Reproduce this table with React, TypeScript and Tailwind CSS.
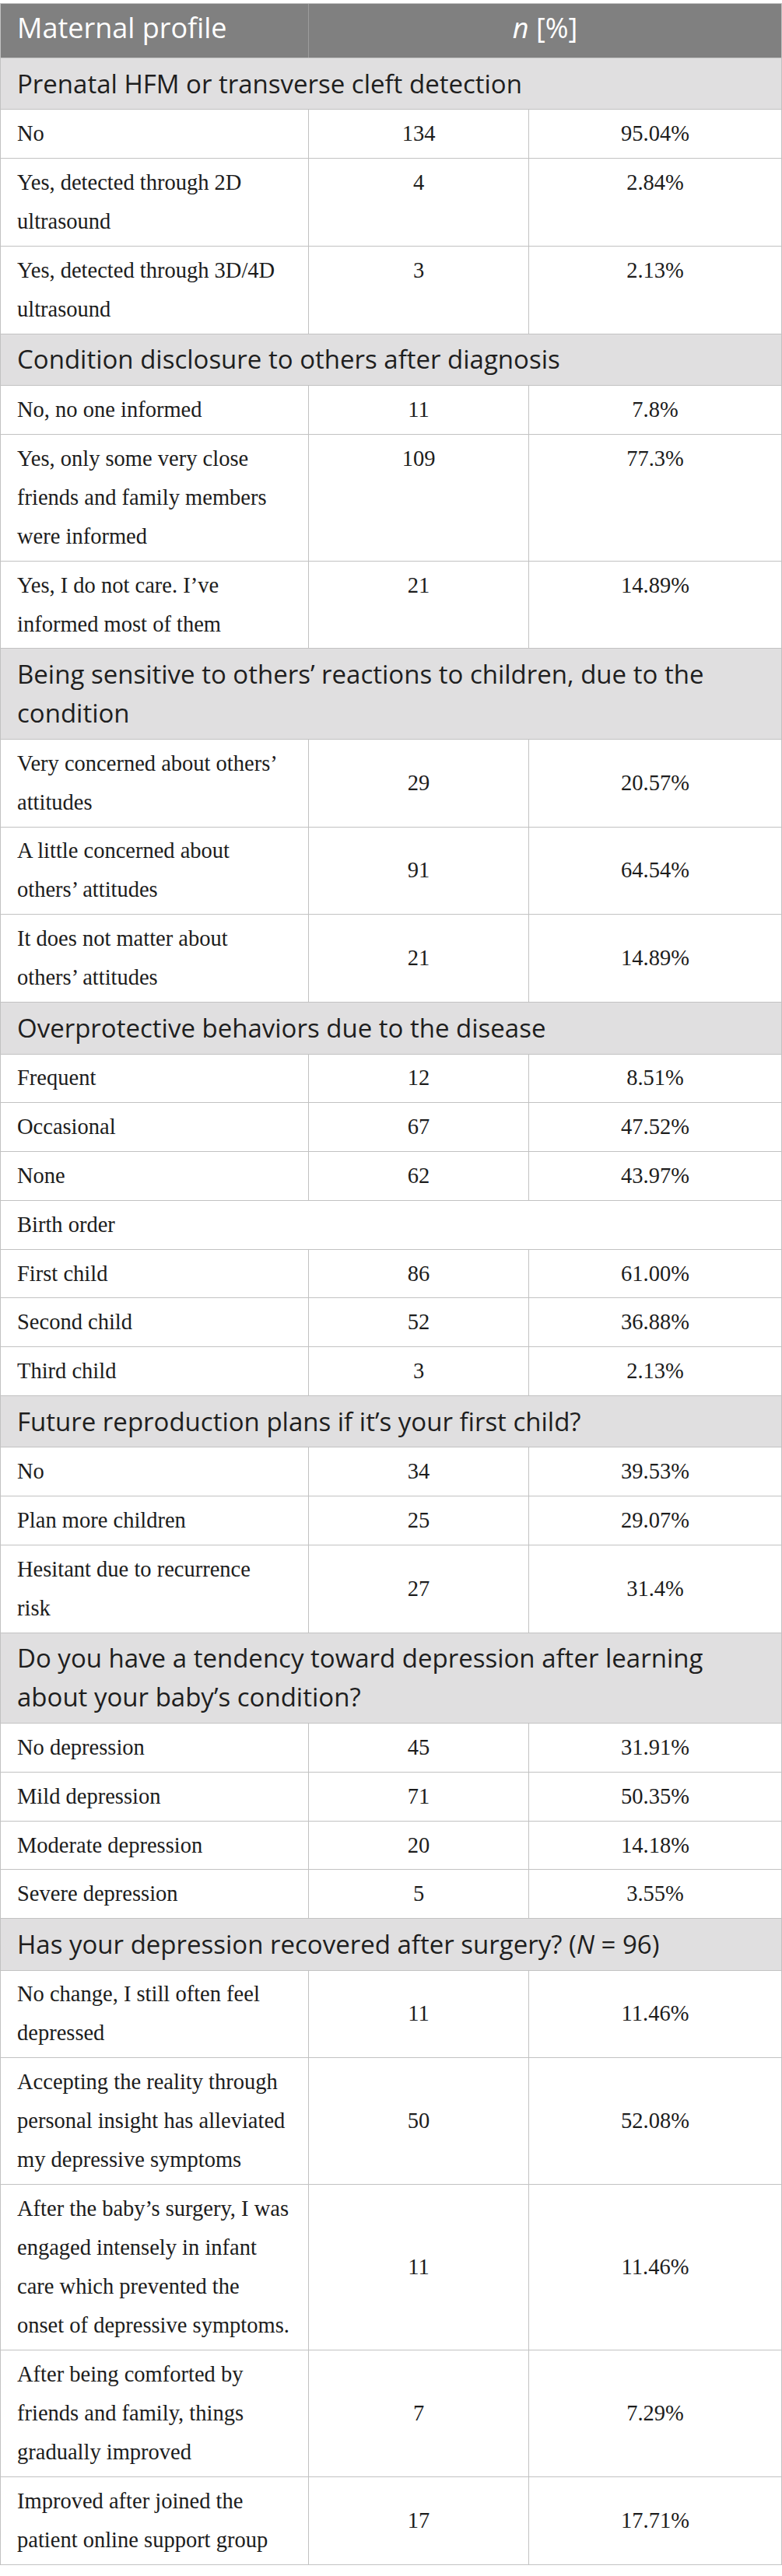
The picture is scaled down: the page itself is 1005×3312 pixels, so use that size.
import React from 'react';

type Row = { label: string[]; n?: string; pct?: string };
type Section = { title: React.ReactNode; middle: boolean; rows: Row[] };

const sections: Section[] = [
  {
    title: 'Prenatal HFM or transverse cleft detection',
    middle: false,
    rows: [
      { label: ['No'], n: '134', pct: '95.04%' },
      { label: ['Yes, detected through 2D', 'ultrasound'], n: '4', pct: '2.84%' },
      { label: ['Yes, detected through 3D/4D', 'ultrasound'], n: '3', pct: '2.13%' },
    ],
  },
  {
    title: 'Condition disclosure to others after diagnosis',
    middle: false,
    rows: [
      { label: ['No, no one informed'], n: '11', pct: '7.8%' },
      {
        label: ['Yes, only some very close', 'friends and family members', 'were informed'],
        n: '109',
        pct: '77.3%',
      },
      { label: ['Yes, I do not care. I\u2019ve', 'informed most of them'], n: '21', pct: '14.89%' },
    ],
  },
  {
    title: (
      <>
        Being sensitive to others{'\u2019'} reactions to children, due to the
        <br />
        condition
      </>
    ),
    middle: true,
    rows: [
      { label: ['Very concerned about others\u2019', 'attitudes'], n: '29', pct: '20.57%' },
      { label: ['A little concerned about', 'others\u2019 attitudes'], n: '91', pct: '64.54%' },
      { label: ['It does not matter about', 'others\u2019 attitudes'], n: '21', pct: '14.89%' },
    ],
  },
  {
    title: 'Overprotective behaviors due to the disease',
    middle: true,
    rows: [
      { label: ['Frequent'], n: '12', pct: '8.51%' },
      { label: ['Occasional'], n: '67', pct: '47.52%' },
      { label: ['None'], n: '62', pct: '43.97%' },
      { label: ['Birth order'] },
      { label: ['First child'], n: '86', pct: '61.00%' },
      { label: ['Second child'], n: '52', pct: '36.88%' },
      { label: ['Third child'], n: '3', pct: '2.13%' },
    ],
  },
  {
    title: 'Future reproduction plans if it\u2019s your first child?',
    middle: true,
    rows: [
      { label: ['No'], n: '34', pct: '39.53%' },
      { label: ['Plan more children'], n: '25', pct: '29.07%' },
      { label: ['Hesitant due to recurrence', 'risk'], n: '27', pct: '31.4%' },
    ],
  },
  {
    title: (
      <>
        Do you have a tendency toward depression after learning
        <br />
        about your baby{'\u2019'}s condition?
      </>
    ),
    middle: true,
    rows: [
      { label: ['No depression'], n: '45', pct: '31.91%' },
      { label: ['Mild depression'], n: '71', pct: '50.35%' },
      { label: ['Moderate depression'], n: '20', pct: '14.18%' },
      { label: ['Severe depression'], n: '5', pct: '3.55%' },
    ],
  },
  {
    title: (
      <>
        Has your depression recovered after surgery? (<i>N</i> = 96)
      </>
    ),
    middle: true,
    rows: [
      { label: ['No change, I still often feel', 'depressed'], n: '11', pct: '11.46%' },
      {
        label: ['Accepting the reality through', 'personal insight has alleviated', 'my depressive symptoms'],
        n: '50',
        pct: '52.08%',
      },
      {
        label: [
          'After the baby\u2019s surgery, I was',
          'engaged intensely in infant',
          'care which prevented the',
          'onset of depressive symptoms.',
        ],
        n: '11',
        pct: '11.46%',
      },
      {
        label: ['After being comforted by', 'friends and family, things', 'gradually improved'],
        n: '7',
        pct: '7.29%',
      },
      { label: ['Improved after joined the', 'patient online support group'], n: '17', pct: '17.71%' },
    ],
  },
];

const serif = "font-['Liberation_Serif',serif] text-[28.5px] leading-[50px] text-[#1c1c1c]";
const sans = "font-['Open_Sans',sans-serif]";

function DataRow({ row, middle }: { row: Row; middle: boolean }) {
  // "Birth order" style sub-heading spans the whole row
  if (!row.n) {
    return (
      <div className={`border-t border-[#c2c2c2] bg-white pl-[21px] py-[5.9px] ${serif}`}>
        {row.label[0]}
      </div>
    );
  }
  const align = middle ? 'items-center' : 'items-start';
  return (
    <div className={`grid grid-cols-[395px_283px_325px] border-t border-[#c2c2c2] bg-white ${serif}`}>
      <div className="pl-[21px] pr-[20px] py-[5.9px] whitespace-nowrap">
        {row.label.map((l, i) => (
          <div key={i}>{l}</div>
        ))}
      </div>
      <div className={`flex ${align} justify-center border-l border-[#c2c2c2] py-[5.9px]`}>{row.n}</div>
      <div className={`flex ${align} justify-center border-l border-[#c2c2c2] py-[5.9px]`}>{row.pct}</div>
    </div>
  );
}

export default function App() {
  return (
    <div className="min-h-screen bg-white pt-[4px]">
      <div className="w-[1005px] border border-[#c2c2c2]">
        {/* header */}
        <div className={`grid grid-cols-[395px_608px] bg-[#808080] text-white ${sans} text-[36px] leading-[50px]`}>
          <div className="pl-[21px] pt-[6px] pb-[13px]">Maternal profile</div>
          <div className="border-l border-[#9c9c9c] pt-[6px] pb-[13px] text-center">
            <i>n</i> [%]
          </div>
        </div>

        {sections.map((s, si) => (
          <div key={si}>
            <div
              className={`border-t border-[#c2c2c2] bg-[#e0dfe0] pl-[21px] py-[7.7px] ${sans} text-[33px] leading-[50px] text-[#1e1e1e]`}
            >
              {s.title}
            </div>
            {s.rows.map((r, ri) => (
              <DataRow key={ri} row={r} middle={s.middle} />
            ))}
          </div>
        ))}
      </div>
    </div>
  );
}
